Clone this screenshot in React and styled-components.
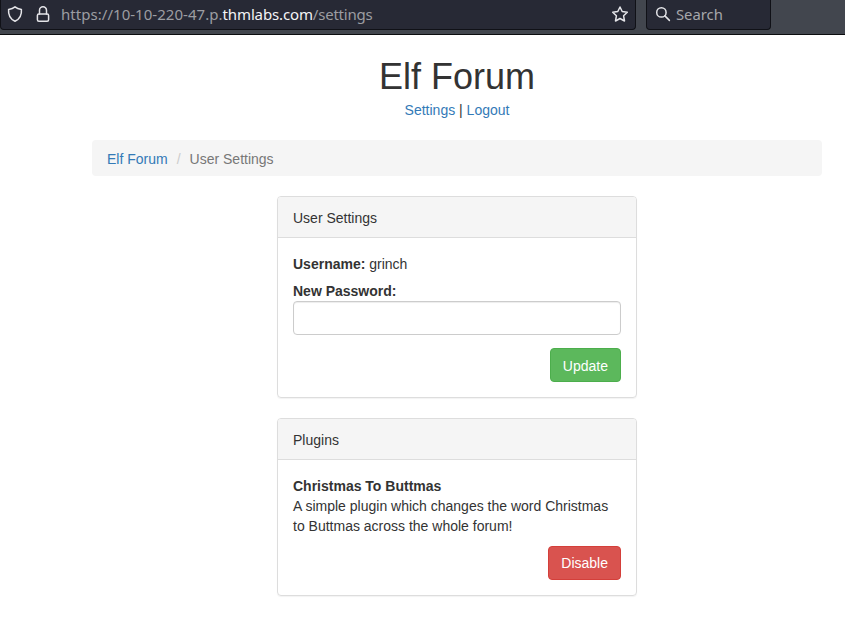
import React from "react";
import styled, { createGlobalStyle, css } from "styled-components";

const GlobalStyle = createGlobalStyle`
  *, *::before, *::after { box-sizing: border-box; }
  body {
    margin: 0;
    background: #fff;
    color: #333;
    font: 14px/20px "Liberation Sans", Arial, sans-serif;
    overflow: hidden;
  }
`;

const Toolbar = styled.header`
  display: flex;
  align-items: flex-start;
  gap: 10px;
  height: 35px;
  background: #42464e;
  border-bottom: 1px solid #0c0d10;
  font-family: "Noto Sans", sans-serif;
  font-size: 15px;
  line-height: 18px;
  color: #9c9da2;
`;

const Field = styled.div`
  display: flex;
  align-items: flex-start;
  height: 30px;
  background: #272935;
  border: 1px solid #101117;
  border-top: 0;
  border-radius: 0 0 4px 4px;
`;

const AddressField = styled(Field)`
  width: 636px;
  padding: 5px 6px 0 5px;
`;

const SearchField = styled(Field)`
  width: 125px;
  padding: 5px 0 0 7px;
  gap: 4px;
  color: #a6a7ab;
  font-size: 14.8px;
`;

const Icon = styled.svg`
  flex: none;
  display: block;
  fill: none;
  stroke: #e4e4e8;
  stroke-width: 1.5;
  stroke-linecap: round;
  stroke-linejoin: round;
`;

const SiteIcons = styled.div`
  display: flex;
  gap: 10px;
  width: 55px;
`;

const Url = styled.div`
  flex: 1;
  white-space: nowrap;
`;

const Protocol = styled.span`
  letter-spacing: 0.04px;
`;

const Domain = styled.span`
  color: #f4f4f6;
  letter-spacing: -0.14px;
`;

const Path = styled.span`
  letter-spacing: -0.2px;
`;

const Page = styled.main`
  width: 730px;
  margin: 22px 0 0 92px;
`;

const Title = styled.h1`
  margin: 0 0 3px;
  font-size: 36px;
  font-weight: 400;
  line-height: 40px;
  text-align: center;
`;

const Link = styled.a`
  color: #337ab7;
  text-decoration: none;
`;

const Nav = styled.nav`
  margin-bottom: 20px;
  text-align: center;
`;

const Breadcrumb = styled.ol`
  display: flex;
  margin: 0 0 20px;
  padding: 9px 15px 7px;
  list-style: none;
  background: #f5f5f5;
  border-radius: 4px;
`;

const Crumb = styled.li`
  color: #777;

  & + &::before {
    content: "/";
    padding: 0 9px;
    color: #ccc;
  }
`;

const Panel = styled.section`
  width: 360px;
  margin: 0 auto 20px;
  border: 1px solid #ddd;
  border-radius: 4px;
  box-shadow: 0 1px 1px rgba(0, 0, 0, 0.05);
`;

const PanelHeading = styled.div`
  height: 41px;
  padding: 11px 15px 9px;
  background: #f5f5f5;
  border-bottom: 1px solid #ddd;
  border-radius: 3px 3px 0 0;
`;

const PanelBody = styled.div`
  padding: 16px 15px 15px;
`;

const UserLine = styled.div`
  margin-bottom: 7px;
`;

const Label = styled.label`
  display: block;
  font-weight: 700;
`;

const Input = styled.input`
  display: block;
  width: 100%;
  height: 34px;
  padding: 6px 12px;
  border: 1px solid #ccc;
  border-radius: 4px;
  box-shadow: inset 0 1px 1px rgba(0, 0, 0, 0.075);
  background: #fff;
`;

const Actions = styled.div`
  display: flex;
  justify-content: flex-end;
  margin-top: ${(p) => p.$gap}px;
`;

const tones = {
  success: css`
    background: #5cb85c;
    border-color: #4cae4c;
    padding-top: 7px;
    padding-bottom: 5px;
  `,
  danger: css`
    background: #d9534f;
    border-color: #d43f3a;
    padding-top: 6px;
    padding-bottom: 6px;
  `,
};

const Button = styled.button`
  height: 34px;
  padding: 0 12px;
  border: 1px solid;
  border-radius: 4px;
  color: #fff;
  font: inherit;
  ${(p) => tones[p.$tone]}
`;

export default function App() {
  return (
    <>
      <GlobalStyle />
      <Toolbar>
        <AddressField>
          <SiteIcons>
            <Icon width="18" height="18" viewBox="0 0 18 18">
              <path d="M9 1.8 C10.8 3.3 13 4 15.4 4.4 C15.9 9.5 13.8 14 9 16.3 C4.2 14 2.1 9.5 2.6 4.4 C5 4 7.2 3.3 9 1.8 Z" />
            </Icon>
            <Icon width="18" height="18" viewBox="0 0 18 18">
              <path d="M5.5 9 V5.3 a3.5 3.5 0 0 1 7 0 V9" />
              <rect x="3.4" y="9" width="11.2" height="7.3" rx="1.5" />
            </Icon>
          </SiteIcons>
          <Url>
            <Protocol>https://10-10-220-47.p.</Protocol>
            <Domain>thmlabs.com</Domain>
            <Path>/settings</Path>
          </Url>
          <Icon width="18" height="18" viewBox="0 0 18 18">
            <path d="M9 2 L11.2 6.5 L16.3 7.2 L12.6 10.8 L13.5 16 L9 13.5 L4.5 16 L5.4 10.8 L1.7 7.2 L6.8 6.5 Z" />
          </Icon>
        </AddressField>
        <SearchField>
          <Icon width="18" height="18" viewBox="0 0 18 18">
            <circle cx="7.4" cy="7.4" r="4.7" />
            <path d="M10.9 10.9 L15.4 15.4" />
          </Icon>
          <span>Search</span>
        </SearchField>
      </Toolbar>

      <Page>
        <Title>Elf Forum</Title>
        <Nav>
          <Link>Settings</Link> | <Link>Logout</Link>
        </Nav>
        <Breadcrumb>
          <Crumb>
            <Link>Elf Forum</Link>
          </Crumb>
          <Crumb>User Settings</Crumb>
        </Breadcrumb>

        <Panel>
          <PanelHeading>User Settings</PanelHeading>
          <PanelBody>
            <UserLine>
              <b>Username:</b> grinch
            </UserLine>
            <Label htmlFor="password">New Password:</Label>
            <Input id="password" type="password" />
            <Actions $gap={13}>
              <Button $tone="success">Update</Button>
            </Actions>
          </PanelBody>
        </Panel>

        <Panel>
          <PanelHeading>Plugins</PanelHeading>
          <PanelBody>
            <b>Christmas To Buttmas</b>
            <div>A simple plugin which changes the word Christmas to Buttmas across the whole forum!</div>
            <Actions $gap={10}>
              <Button $tone="danger">Disable</Button>
            </Actions>
          </PanelBody>
        </Panel>
      </Page>
    </>
  );
}
